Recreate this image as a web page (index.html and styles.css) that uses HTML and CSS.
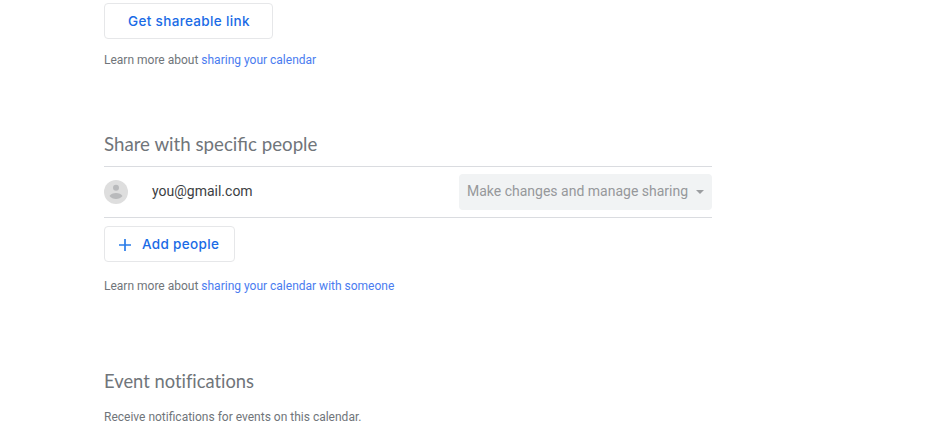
FILE: index.html
```html
<!DOCTYPE html>
<html lang="en">
<head>
<meta charset="utf-8">
<title>Calendar settings</title>
<link rel="stylesheet" href="styles.css">
</head>
<body>
<main class="settings">
  <section class="link-section">
    <button class="button button-link"><span class="label-link">Get shareable link</span></button>
    <p class="help">Learn more about <a href="#">sharing your calendar</a></p>
  </section>
  <section class="people-section">
    <h2><span class="title-people">Share with specific people</span></h2>
    <div class="person">
      <svg class="avatar" viewBox="0 0 24 24"><circle cx="12" cy="12" r="12" fill="#dedede"/><circle cx="12" cy="7.7" r="3" fill="#b9babc"/><path d="M5.500 16c1-2 3.800-3 6.500-3s5.500 1 6.500 3c-1.500 2-4 3-6.500 3s-5-1-6.500-3z" fill="#b9babc"/></svg>
      <span class="email">you@gmail.com</span>
      <div class="permission"><span class="permission-text">Make changes and manage sharing</span><i class="caret"></i></div>
    </div>
    <button class="button button-add"><svg class="plus" viewBox="0 0 12 12"><path d="M6 0v12M0 6h12" stroke="#2b7de9" stroke-width="1.7"/></svg><span class="label-add">Add people</span></button>
    <p class="help">Learn more about <a href="#">sharing your calendar with someone</a></p>
  </section>
  <section class="events-section">
    <h2><span class="title-events">Event notifications</span></h2>
    <p class="help">Receive notifications for events on this calendar.</p>
  </section>
</main>
</body>
</html>
```
FILE: styles.css
```css
* { box-sizing: border-box; }
body { margin: 0; height: 423px; overflow: hidden; background: #fff; font-family: Roboto, sans-serif; color: #70757a; }
h2, p { margin: 0; }
.settings { width: 608px; margin-left: 104px; padding-top: 3px; }
.button { display: flex; align-items: center; height: 36px; padding: 0 0 0 23px; border: 1px solid #e6e7e9; border-radius: 4px; background: #fff; color: #1a6be6; font: 500 13.5px/20px Inter, sans-serif; letter-spacing: .34px; white-space: nowrap; }
.button-link { width: 169px; }
.button-add { width: 131px; padding-left: 14px; margin-top: 8px; }
.plus { width: 12px; height: 12px; margin-top: 1px; margin-right: 11px; }
.help { margin-top: 13px; font-size: 12px; line-height: 16px; white-space: nowrap; }
.help a { color: #4a7cf0; text-decoration: none; }
.people-section { margin-top: 64px; }
.people-section .help { margin-top: 16px; }
h2 { height: 24px; font: 400 18px/24px Lato, sans-serif; white-space: nowrap; }
.title-people { font-size: 18.7px; }
.title-events { font-size: 18.35px; font-variant-ligatures: none; }
.person { display: flex; align-items: center; height: 52px; margin-top: 10px; border-top: 1px solid #dadce0; border-bottom: 1px solid #dadce0; }
.avatar { width: 24px; height: 24px; }
.email { margin-left: 24px; padding-bottom: 2px; font-size: 14px; color: #3c4043; }
.permission { display: flex; align-items: center; width: 253px; height: 36px; margin-left: auto; padding: 0 8px; border-radius: 4px; background: #f1f3f4; color: #96989b; font-size: 14px; white-space: nowrap; }
.permission-text { padding-bottom: 2px; }
.caret { margin-left: auto; border: 4px solid transparent; border-top-color: #9c9ea1; border-bottom: 0; }
.events-section { margin-top: 75px; }
.events-section .help { margin-top: 16px; }
```
